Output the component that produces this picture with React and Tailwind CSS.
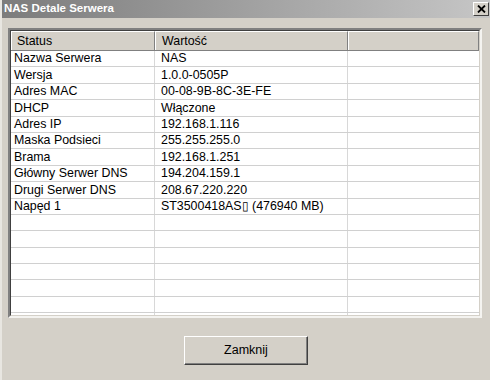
const rows = [
  ["Nazwa Serwera", "NAS"],
  ["Wersja", "1.0.0-0505P"],
  ["Adres MAC", "00-08-9B-8C-3E-FE"],
  ["DHCP", "Włączone"],
  ["Adres IP", "192.168.1.116"],
  ["Maska Podsieci", "255.255.255.0"],
  ["Brama", "192.168.1.251"],
  ["Główny Serwer DNS", "194.204.159.1"],
  ["Drugi Serwer DNS", "208.67.220.220"],
  ["Napęd 1", "ST3500418AS\u25AF (476940 MB)"],
  ["", ""],
  ["", ""],
  ["", ""],
  ["", ""],
  ["", ""],
  ["", ""],
  ["", ""],
];

export default function App() {
  return (
    <div className="w-[490px] h-[380px] bg-[#d4d0c8] flex flex-col font-['Liberation_Sans',Arial,sans-serif] border-l-2 border-[#e8e6e1] overflow-hidden">
      <div className="h-[18px] flex items-center justify-between bg-gradient-to-r from-[#7c7c7c] to-[#c6c6c6] pl-[2px] pr-[1px]">
        <span className="text-white font-bold text-[11.5px] leading-none">NAS Detale Serwera</span>
        <button className="w-[16px] h-[14px] bg-[#d4d0c8] border border-t-white border-l-white border-r-[#404040] border-b-[#404040] flex items-center justify-center">
          <svg width="9" height="8" viewBox="0 0 9 8">
            <path d="M1 0.5 L8 7.5 M8 0.5 L1 7.5" stroke="#000" strokeWidth="1.8" />
          </svg>
        </button>
      </div>

      <div className="mt-[10px] ml-[6px] w-[474px] h-[290px] border-2 border-t-[#808080] border-l-[#808080] border-r-[#f4f3f0] border-b-[#f4f3f0]">
        <div className="w-full h-full border border-t-[#404040] border-l-[#404040] border-r-[#d4d0c8] border-b-[#d4d0c8] bg-white overflow-hidden text-[12.4px] text-black">
          <div className="flex h-[20px] bg-[#d4d0c8] border-b border-[#808080]">
            <div className="w-[144px] pl-[5px] flex items-center border-r border-[#808080] border-l border-l-white border-t border-t-white">Status</div>
            <div className="w-[193px] pl-[6px] flex items-center border-r border-[#808080] border-l border-l-white border-t border-t-white">Wartość</div>
            <div className="flex-1 border-r border-[#808080] border-l border-l-white border-t border-t-white"></div>
          </div>
          {rows.map((r, i) => (
            <div key={i} className="flex h-[16.4px] border-b border-[#d0d0d0]">
              <div className="w-[144px] pl-[3px] flex items-center border-r border-[#d8d8d8] whitespace-nowrap">{r[0]}</div>
              <div className="w-[193px] pl-[6px] flex items-center border-r border-[#d8d8d8] whitespace-nowrap">{r[1]}</div>
              <div className="flex-1"></div>
            </div>
          ))}
        </div>
      </div>

      <div className="flex justify-center mt-[18px]">
        <button className="w-[124px] h-[29px] bg-[#d4d0c8] border border-t-white border-l-white border-r-[#404040] border-b-[#404040] text-[12.5px] text-black shadow-[inset_-1px_-1px_0_#808080]">
          Zamknij
        </button>
      </div>
    </div>
  );
}
